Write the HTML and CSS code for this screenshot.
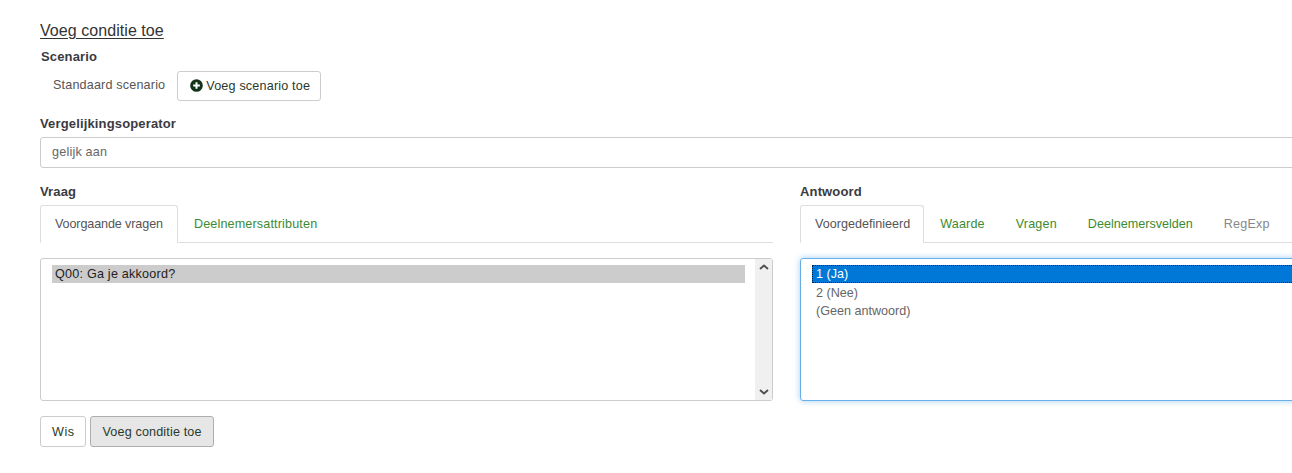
FILE: index.html
```html
<!DOCTYPE html>
<html lang="nl">
<head>
<meta charset="utf-8">
<title>Voeg conditie toe</title>
<link rel="stylesheet" href="styles.css">
</head>
<body>
<main class="page">
  <h4 class="title">Voeg conditie toe</h4>
  <div class="label label-scenario">Scenario</div>
  <div class="scenario-row">
    <span class="scenario-name">Standaard scenario</span>
    <button class="btn btn-add" type="button">
      <svg class="plus" viewBox="0 0 14 14" width="13" height="13"><circle cx="7" cy="7" r="6.8" fill="#12331a"/><path d="M7 3.4v7.2M3.4 7h7.2" stroke="#fff" stroke-width="2.2"/></svg>
      <span>Voeg scenario toe</span>
    </button>
  </div>
  <div class="label label-op">Vergelijkingsoperator</div>
  <div class="input">gelijk aan</div>
  <div class="columns">
    <section class="col">
      <div class="label">Vraag</div>
      <div class="tabs tabs-left">
        <span class="tab active">Voorgaande vragen</span>
        <span class="tab">Deelnemersattributen</span>
      </div>
      <div class="listbox">
        <div class="options">
          <div class="option selected-grey">Q00: Ga je akkoord?</div>
        </div>
        <div class="scrollbar">
          <svg viewBox="0 0 10 6" width="10" height="6"><path d="M1 5l4-3.5L9 5" fill="none" stroke="#505050" stroke-width="2"/></svg>
          <svg viewBox="0 0 10 6" width="10" height="6"><path d="M1 1l4 3.5L9 1" fill="none" stroke="#505050" stroke-width="2"/></svg>
        </div>
      </div>
      <div class="actions">
        <button class="btn btn-clear" type="button">Wis</button>
        <button class="btn btn-pressed" type="button">Voeg conditie toe</button>
      </div>
    </section>
    <section class="col">
      <div class="label">Antwoord</div>
      <div class="tabs tabs-right">
        <span class="tab active">Voorgedefinieerd</span>
        <span class="tab">Waarde</span>
        <span class="tab">Vragen</span>
        <span class="tab tab-tight">Deelnemersvelden</span>
        <span class="tab muted">RegExp</span>
      </div>
      <div class="listbox focused">
        <div class="options">
          <div class="option selected-blue">1 (Ja)</div>
          <div class="option">2 (Nee)</div>
          <div class="option">(Geen antwoord)</div>
        </div>
      </div>
    </section>
  </div>
</main>
</body>
</html>
```
FILE: styles.css
```css
* { box-sizing: border-box; }
html, body { margin: 0; height: 473px; overflow: hidden; background: #fff; }
body { font-family: "Liberation Sans", Arial, sans-serif; font-size: 12.6px; color: #555; }
.page { width: 1493px; padding: 21px 0 0 40px; }
.title { margin: 0; font-size: 16px; font-weight: 400; line-height: 19px; letter-spacing: .06px; color: #333; text-decoration: underline; text-underline-offset: 2px; }
.label { font-size: 13px; font-weight: 700; line-height: 16px; letter-spacing: .15px; color: #3a3a42; }
.label-scenario { margin: 9px 0 0 1px; }
.scenario-row { display: flex; align-items: center; gap: 12px; margin-top: 6px; padding-left: 13px; }
.scenario-name { margin-top: -2px; letter-spacing: .17px; color: #555; }
.btn { height: 31px; padding: 0 11px; border: 1px solid #ccc; border-radius: 3px; background: #fff; font: 12.6px "Liberation Sans", Arial, sans-serif; letter-spacing: .15px; color: #2a3a2a; }
.btn-add { display: inline-flex; align-items: center; gap: 3px; height: 30px; padding: 0 10px 0 12px; letter-spacing: .18px; }
.btn-add .plus { margin-top: -2px; }
.btn-clear { letter-spacing: .5px; }
.btn-pressed { background: #e6e6e6; border-color: #adadad; }
.plus { display: block; }
.label-op { margin-top: 15px; }
.input { height: 31px; margin-top: 5px; padding: 0 11px; border: 1px solid #ccc; border-radius: 3px; line-height: 28px; letter-spacing: .2px; color: #666; }
.columns { display: grid; grid-template-columns: 733px 693px; column-gap: 27px; margin-top: 16px; }
.tabs { display: flex; height: 38px; margin-top: 5px; border-bottom: 1px solid #ddd; }
.tab { height: 37px; margin-right: 1px; padding: 0 14px; border: 1px solid transparent; line-height: 36px; letter-spacing: .15px; color: #3c8a32; }
.tab.active { height: 38px; border-color: #ddd #ddd #fff; border-radius: 3px 3px 0 0; background: #fff; letter-spacing: 0; color: #555; }
.tab.tab-tight { letter-spacing: 0; }
.tabs-left .active { letter-spacing: -.12px; }
.tabs-right .active { padding-right: 13px; }
.tab.muted { color: #888; }
.listbox { display: flex; height: 143px; margin-top: 15px; border: 1px solid #ccc; border-radius: 3px; }
.listbox.focused { border-color: #66afe9; box-shadow: 0 0 6px rgba(102,175,233,.6); }
.options { flex: 1; padding: 6px 10px 0 11px; }
.option { height: 18px; padding: 1px 3px 0; line-height: 17px; color: #666; }
.focused .option { padding-left: 4px; }
.selected-grey { background: #ccc; letter-spacing: .22px; color: #222; }
.selected-blue { margin-bottom: 1px; background: #0078d7; color: #fff; outline: 1px dotted #0b2340; outline-offset: -1px; }
.scrollbar { display: flex; flex-direction: column; justify-content: space-between; align-items: center; width: 17px; padding: 5px 0; background: #f0f0f0; }
.actions { display: flex; gap: 4px; margin-top: 15px; }
```
